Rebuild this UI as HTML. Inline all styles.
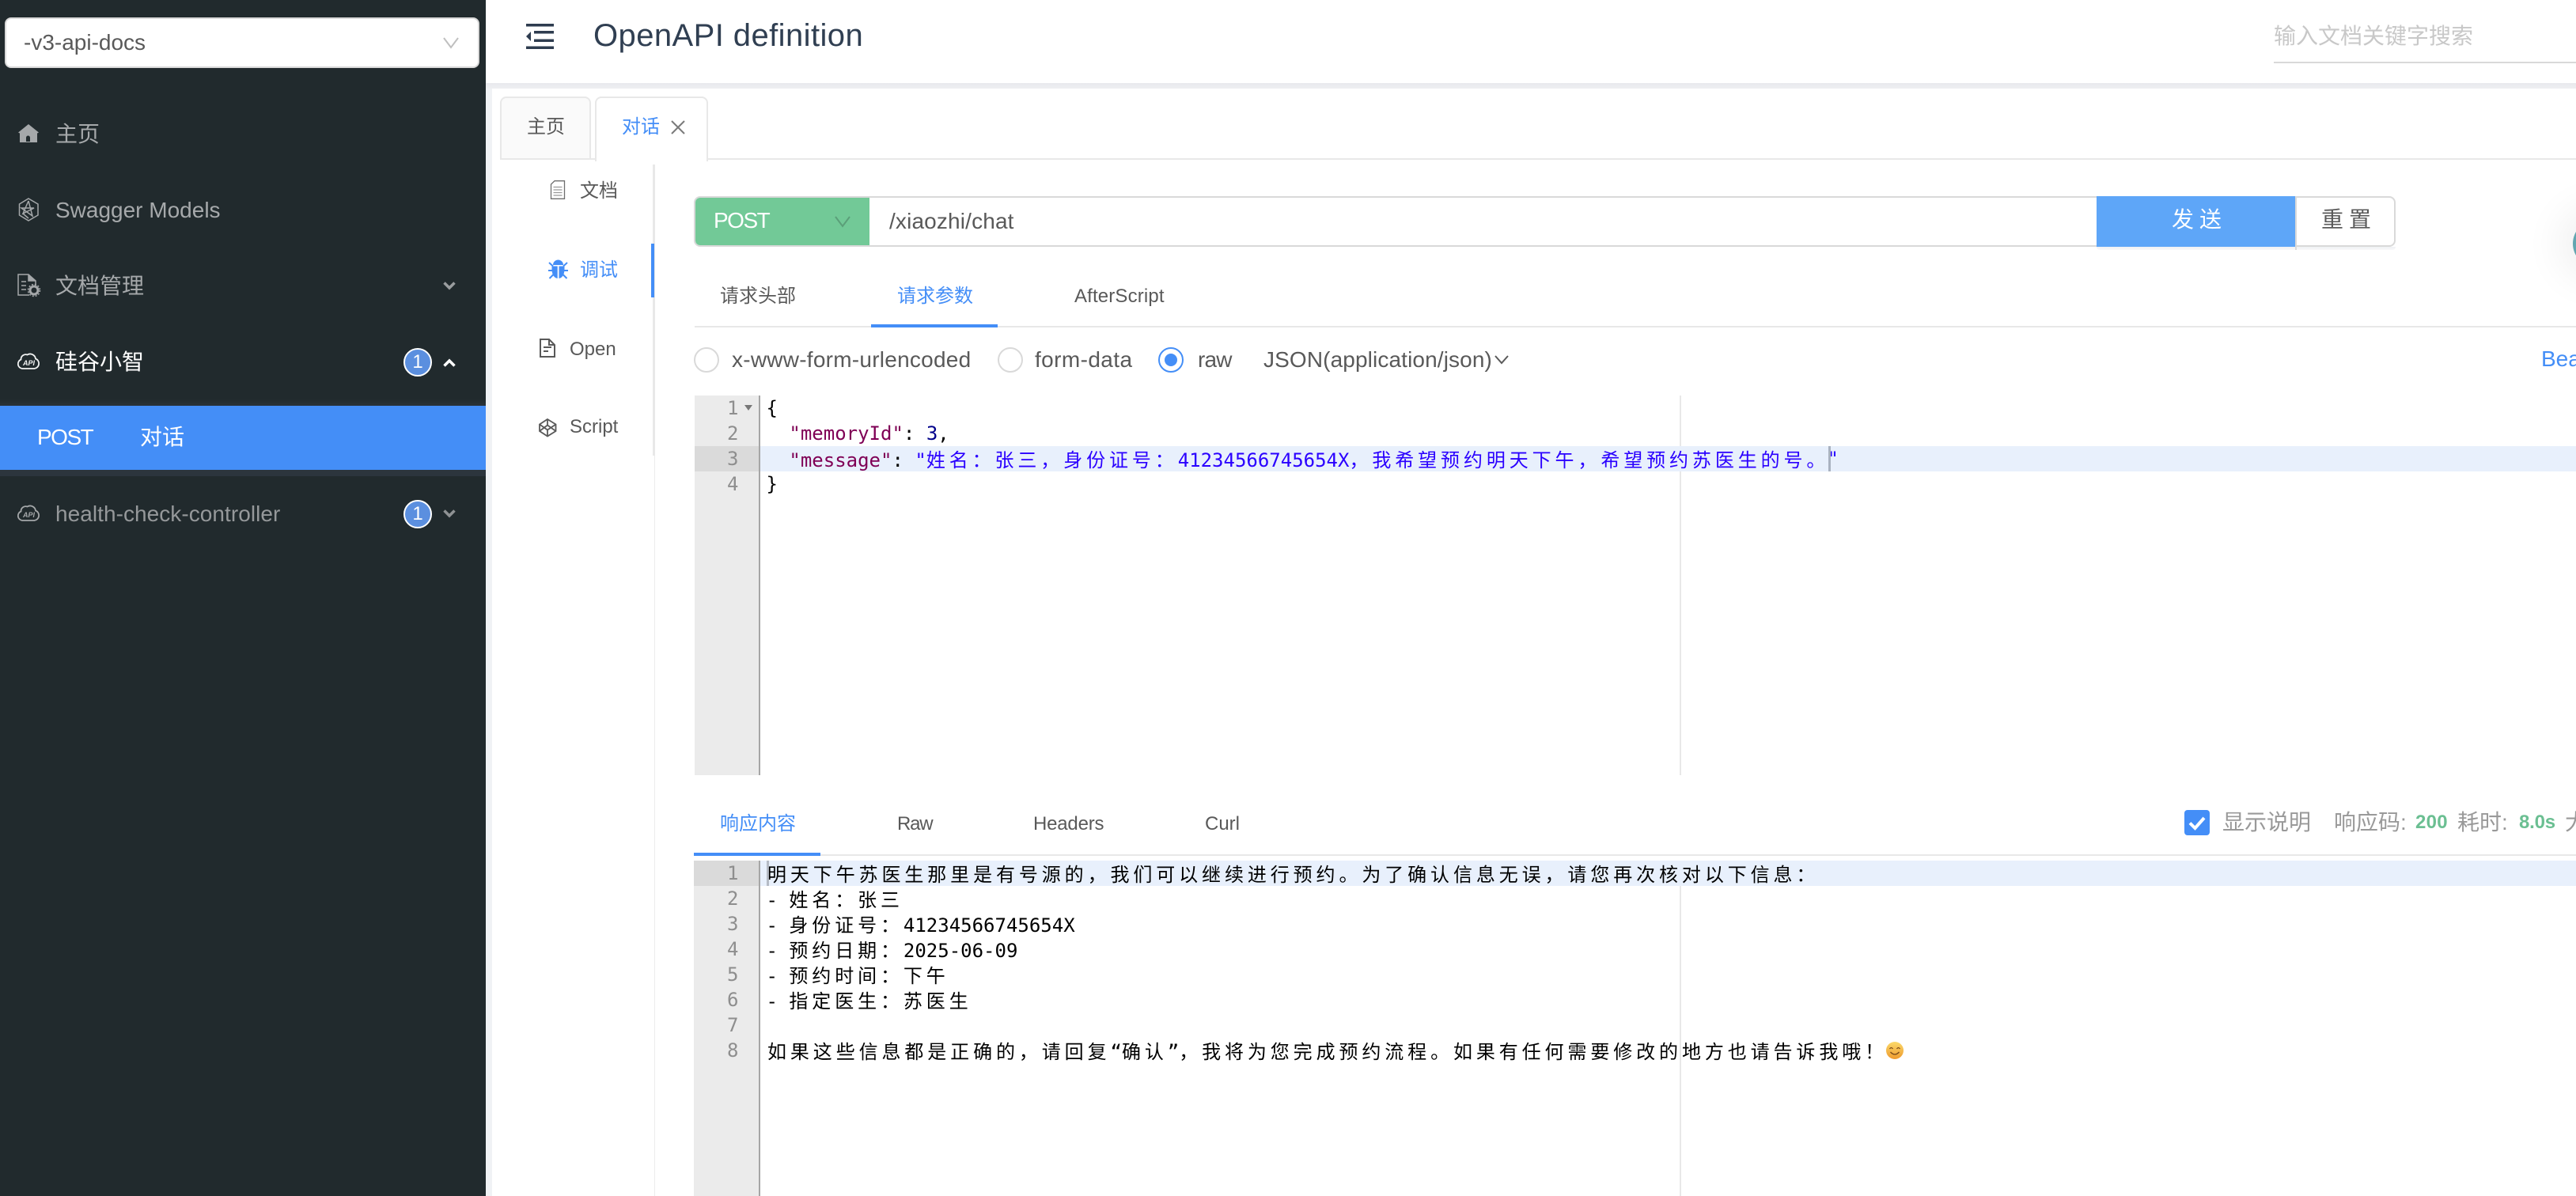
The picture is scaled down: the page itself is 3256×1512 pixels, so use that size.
<!DOCTYPE html>
<html lang="zh-CN"><head><meta charset="utf-8"><title>OpenAPI definition</title>
<style>
*{box-sizing:border-box;margin:0;padding:0}
html,body{width:3256px;height:1512px;overflow:hidden;background:#fff}
body{position:relative;font-family:"Liberation Sans","Noto Sans CJK SC",sans-serif;color:#595959}
.a{position:absolute}
.t{position:absolute;white-space:nowrap;line-height:40px;height:40px}
.f28{font-size:28px}.f24{font-size:24px}
.side{color:#a6a9ab}
.blue{color:#448ef7}
.badge{position:absolute;left:510px;width:36px;height:36px;border-radius:50%;background:#5b8fdf;border:2px solid #fff;color:#fff;font-size:24px;line-height:32px;text-align:center}
svg{position:absolute;overflow:visible}
.m{position:absolute;left:968.5px;height:32px;line-height:32px;font-family:"DejaVu Sans Mono","Noto Sans CJK SC",monospace;font-size:24px;white-space:pre;color:#000}
.m i{font-style:normal;letter-spacing:4.898px;font-family:"Noto Sans CJK SC",sans-serif}
.n{position:absolute;left:878px;width:55.5px;height:32px;line-height:32px;text-align:right;font-family:"DejaVu Sans Mono",monospace;font-size:24px;color:#8e8e8e}
.k{color:#7f0055}.s{color:#2a00ff}.d{color:#00008b}
</style></head><body>

<!-- sidebar -->
<div class="a" style="left:0;top:0;width:614px;height:1512px;background:#212a2d"></div>
<div class="a" style="left:614px;top:105px;width:8px;height:1407px;background:#f0f2f5"></div>
<div class="a" style="left:6px;top:22px;width:600px;height:64px;background:#fff;border:2px solid #d9d9d9;border-radius:8px"></div>
<div class="t f28" style="left:30px;top:34px;color:#595959">-v3-api-docs</div>
<svg style="left:560px;top:47px" width="20" height="14"><path d="M1 1L10 13L19 1" fill="none" stroke="#bfbfbf" stroke-width="2"/></svg>

<svg style="left:0;top:0" width="60" height="700">
<path d="M36 157L23 167.5L25 168.500V180H47V168.500L49 167.500Z" fill="#a5a8aa"/><path d="M33 179V174a2.500 2.500 0 0 1 5 0V179Z" fill="#212a2d"/>
<g fill="none" stroke="#a5a8aa" stroke-width="1.500"><path d="M36 251L48 258V272L36 279L24.500 272V258Z"/><path d="M36 254L29 270L43 263H27L41 273L36 254M29 270L36 276"/></g>
<g fill="none" stroke="#a5a8aa" stroke-width="1.500"><path d="M37 373H23V347H36L45 355V361"/><path d="M36 347V355H45" fill="#a5a8aa"/><path d="M27 356H33M27 361H33M27 366H33"/></g>
<circle cx="43" cy="367" r="5" fill="none" stroke="#a5a8aa" stroke-width="3"/><circle cx="43" cy="367" r="7.500" fill="none" stroke="#a5a8aa" stroke-width="1.500" stroke-dasharray="2 2"/>
<path d="M28 466a6 6 0 0 1-1.500-11.500a6 6 0 0 1 8-6a7 7 0 0 1 10.500 5a6.500 6.500 0 0 1-1.500 12.500Z" fill="none" stroke="#f2f3f3" stroke-width="1.800" />
<text x="29" y="462" font-family="Liberation Sans" font-style="italic" font-weight="bold" font-size="9" fill="#f2f3f3">API</text>
<path d="M28 658a6 6 0 0 1-1.500-11.500a6 6 0 0 1 8-6a7 7 0 0 1 10.500 5a6.500 6.500 0 0 1-1.500 12.500Z" fill="none" stroke="#a5a8aa" stroke-width="1.800" />
<text x="29" y="654" font-family="Liberation Sans" font-style="italic" font-weight="bold" font-size="9" fill="#a5a8aa">API</text>
</svg>

<div class="t f28 side" style="left:70px;top:150px">主页</div>
<div class="t f28 side" style="left:70px;top:246px">Swagger Models</div>
<div class="t f28 side" style="left:70px;top:342px">文档管理</div>
<svg style="left:560px;top:356px" width="16" height="10"><path d="M1.500 1.500L8 8L14.500 1.500" fill="none" stroke="#9a9d9f" stroke-width="3.500"/></svg>
<div class="t f28" style="left:70px;top:438px;color:#fff">硅谷小智</div>
<div class="badge" style="top:440px">1</div>
<svg style="left:560px;top:454px" width="16" height="10"><path d="M1.500 8.500L8 2L14.500 8.500" fill="none" stroke="#fff" stroke-width="3.500"/></svg>
<div class="a" style="left:0;top:505px;width:614px;height:8px;background:linear-gradient(#212a2d,#2a3238)"></div>
<div class="a" style="left:0;top:513px;width:614px;height:81px;background:#448ef7"></div>
<div class="a" style="left:0;top:594px;width:614px;height:8px;background:#2c353d"></div>
<div class="t f28" style="left:47px;top:533px;color:#fff;letter-spacing:-1.500px">POST</div>
<div class="t f28" style="left:177px;top:533px;color:#fff">对话</div>
<div class="t f28" style="left:70px;top:630px;color:#95989a;letter-spacing:.05px">health-check-controller</div>
<div class="badge" style="top:632px">1</div>
<svg style="left:560px;top:644px" width="16" height="10"><path d="M1.500 1.500L8 8L14.500 1.500" fill="none" stroke="#8f9294" stroke-width="3.500"/></svg>

<!-- header -->
<div class="a" style="left:614px;top:105px;width:2642px;height:7px;background:linear-gradient(#e8e9ed,#eeeff2)"></div>
<svg style="left:660px;top:26px" width="44" height="40" fill="#2e3c4f"><rect x="5" y="4" width="35" height="3.500"/><rect x="15" y="13" width="25" height="3.500"/><rect x="15" y="23.500" width="25" height="3.500"/><rect x="5" y="32.500" width="35" height="3.500"/><path d="M5 20L11 14V26Z"/></svg>
<div class="t" style="left:750px;top:25px;font-size:40px;color:#303f52;letter-spacing:.42px">OpenAPI definition</div>
<div class="t f28" style="left:2874px;top:26px;color:#c8c8c8">输入文档关键字搜索</div>
<div class="a" style="left:2874px;top:78px;width:382px;height:2px;background:#d9d9d9"></div>

<!-- page tabs -->
<div class="a" style="left:632px;top:200px;width:2624px;height:2px;background:#e8e8e8"></div>
<div class="a" style="left:632px;top:122px;width:115px;height:80px;background:#fafafa;border:2px solid #e8e8e8;border-radius:8px 8px 0 0"></div>
<div class="a" style="left:752px;top:122px;width:143px;height:82px;background:#fff;border:2px solid #e8e8e8;border-bottom:0;border-radius:8px 8px 0 0"></div>
<div class="t f24" style="left:666px;top:141px">主页</div>
<div class="t f24 blue" style="left:786px;top:141px">对话</div>
<svg style="left:848px;top:152px" width="18" height="18"><path d="M1 1L17 17M17 1L1 17" stroke="#7a7a7a" stroke-width="2" fill="none"/></svg>

<!-- vertical tabs -->
<div class="a" style="left:825px;top:208px;width:3px;height:368px;background:#e8e8e8"></div>
<div class="a" style="left:827px;top:576px;width:1px;height:936px;background:#ececec"></div>
<div class="a" style="left:823px;top:308px;width:4px;height:68px;background:#448ef7"></div>
<svg style="left:0;top:0" width="760" height="600">
<g fill="none" stroke="#6e6e6e" stroke-width="1.300"><path d="M701 228.700H713.500V251.300H696.500V233Z"/><path d="M699.500 236.500H710.500M699.500 240H710.500M699.500 243.500H710.500M699.500 247H710.500" stroke="#999"/></g>
<g fill="#448ef7"><path d="M699 335a6.500 6.500 0 0 1 13 0Z"/><path d="M704.700 336.500V352C699 351 697.500 345 697.500 340V336.500Z"/><path d="M706.500 336.500V352C712 351 713.500 345 713.500 340V336.500Z"/></g>
<g stroke="#448ef7" stroke-width="2" fill="none"><path d="M694 332L699 336.500M717 332L712 336.500M693 342H698M718 342H713M694.500 352L699.500 347M716.500 352L711.500 347"/></g>
<g fill="none" stroke="#595959" stroke-width="2"><path d="M683 429H694L701 436V451H683Z"/><path d="M694 429V436H701"/><path d="M687 439H697M687 444H693"/></g>
<g fill="none" stroke="#595959" stroke-width="1.800"><path d="M692 530L702.500 536.500V545L692 551.500L682 545V536.500Z"/><path d="M682 536.500L692 543.500L702.500 536.500M682 545L692 537.500L702.500 545M692 530V537.500M692 543.500V551.500"/></g>
</svg>
<div class="t f24" style="left:733px;top:222px">文档</div>
<div class="t f24 blue" style="left:733px;top:322px">调试</div>
<div class="t f24" style="left:720px;top:422px">Open</div>
<div class="t f24" style="left:720px;top:520px">Script</div>

<!-- url bar -->
<div class="a" style="left:877px;top:248px;width:2151px;height:64px;border:2px solid #d9d9d9;border-radius:8px;background:#fff"></div>
<div class="a" style="left:879px;top:250px;width:220px;height:60px;background:#72c997;border-radius:6px 0 0 6px"></div>
<div class="t f28" style="left:902px;top:259px;color:#fff;letter-spacing:-1.500px">POST</div>
<svg style="left:1055px;top:273px" width="20" height="14"><path d="M1 1L10 13L19 1" fill="none" stroke="#5b9f79" stroke-width="2"/></svg>
<div class="t f28" style="left:1124px;top:260px;letter-spacing:.15px">/xiaozhi/chat</div>
<div class="a" style="left:2650px;top:312px;width:378px;height:4px;background:linear-gradient(#eff1f4,#f9f9fa);border-radius:0 0 6px 6px"></div>
<div class="a" style="left:2650px;top:248px;width:251px;height:64px;background:#5ea6f8"></div>
<div class="a" style="left:2901px;top:248px;width:2px;height:68px;background:#d9d9d9"></div>
<div class="t f28" style="left:2745px;top:258px;color:#fff;letter-spacing:7px">发送</div>
<div class="t f28" style="left:2934px;top:258px;letter-spacing:7px">重置</div>
<div class="a" style="left:3252px;top:278px;width:60px;height:60px;border-radius:50%;background:#62a6b0;box-shadow:0 0 50px 18px rgba(0,0,0,.06)"></div>

<!-- param tabs -->
<div class="a" style="left:878px;top:412px;width:2378px;height:2px;background:#e8e8e8"></div>
<div class="a" style="left:1101px;top:410px;width:160px;height:4px;background:#448ef7"></div>
<div class="t f24" style="left:910px;top:355px">请求头部</div>
<div class="t f24 blue" style="left:1134px;top:355px">请求参数</div>
<div class="t f24" style="left:1358px;top:355px;letter-spacing:.15px">AfterScript</div>

<!-- radios -->
<div class="a" style="left:877px;top:439px;width:32px;height:32px;border:2px solid #d9d9d9;border-radius:50%"></div>
<div class="t f28" style="left:925px;top:435px;letter-spacing:.25px">x-www-form-urlencoded</div>
<div class="a" style="left:1261px;top:439px;width:32px;height:32px;border:2px solid #d9d9d9;border-radius:50%"></div>
<div class="t f28" style="left:1308px;top:435px;letter-spacing:.4px">form-data</div>
<div class="a" style="left:1464px;top:439px;width:32px;height:32px;border:2px solid #448ef7;border-radius:50%"></div>
<div class="a" style="left:1472px;top:447px;width:16px;height:16px;background:#448ef7;border-radius:50%"></div>
<div class="t f28" style="left:1514px;top:435px;letter-spacing:-.8px">raw</div>
<div class="t f28" style="left:1597px;top:435px;letter-spacing:.12px">JSON(application/json)</div>
<svg style="left:1889px;top:449px" width="18" height="12"><path d="M1 1L9 10L17 1" fill="none" stroke="#595959" stroke-width="2"/></svg>
<div class="t f28 blue" style="left:3212px;top:434px">Beautify</div>

<!-- editor 1 -->
<div class="a" style="left:878px;top:500px;width:81px;height:480px;background:#ebebeb"></div>
<div class="a" style="left:959px;top:500px;width:2px;height:480px;background:#a6a6a6"></div>
<div class="a" style="left:2123px;top:500px;width:1.500px;height:480px;background:#e8e8e8"></div>
<div class="a" style="left:878px;top:564px;width:81px;height:32px;background:#dadada"></div>
<div class="a" style="left:961px;top:564px;width:2295px;height:32px;background:#e8f0fc"></div>
<div class="n" style="top:500px">1</div><div class="n" style="top:532px">2</div><div class="n" style="top:564px">3</div><div class="n" style="top:596px">4</div>
<svg style="left:941px;top:512px" width="10" height="8"><path d="M0 0H10L5 7Z" fill="#777"/></svg>
<div class="m" style="top:500px">{</div>
<div class="m" style="top:532px">  <span class="k">"memoryId"</span>: <span class="d">3</span>,</div>
<div class="m" style="top:564px">  <span class="k">"message"</span>: <span class="s">"<i>姓名：张三，身份证号：</i>41234566745654X<i>，我希望预约明天下午，希望预约苏医生的号。</i></span></div>
<div class="m s" style="top:564px;left:2309.5px">"</div>
<div class="m" style="top:596px">}</div>
<div class="a" style="left:2311px;top:564px;width:3px;height:32px;background:#a9b2c0"></div>

<!-- response tabs -->
<div class="a" style="left:877px;top:1080px;width:2379px;height:2px;background:#e8e8e8"></div>
<div class="a" style="left:877px;top:1078px;width:160px;height:4px;background:#448ef7"></div>
<div class="t f24 blue" style="left:910px;top:1022px">响应内容</div>
<div class="t f24" style="left:1134px;top:1022px;letter-spacing:-1.200px">Raw</div>
<div class="t f24" style="left:1306px;top:1022px;letter-spacing:-.2px">Headers</div>
<div class="t f24" style="left:1523px;top:1022px">Curl</div>
<div class="a" style="left:2761px;top:1024px;width:32px;height:32px;background:#448ef7;border-radius:4px"></div>
<svg style="left:2761px;top:1024px" width="32" height="32"><path d="M7 16.500L13.500 23L25 10" fill="none" stroke="#fff" stroke-width="4"/></svg>
<div class="t f28" style="left:2809px;top:1020px;color:#999">显示说明</div>
<div class="t f28" style="left:2950px;top:1020px;color:#999">响应码:</div>
<div class="t f24" style="left:3053px;top:1020px;color:#6bbf92;font-weight:bold;letter-spacing:.3px">200</div>
<div class="t f28" style="left:3106px;top:1020px;color:#999">耗时:</div>
<div class="t f24" style="left:3184px;top:1020px;color:#6bbf92;font-weight:bold;letter-spacing:-.2px">8.0s</div>
<div class="t f28" style="left:3242px;top:1020px;color:#999">大小:</div>

<!-- editor 2 -->
<div class="a" style="left:877px;top:1088px;width:82px;height:424px;background:#ebebeb"></div>
<div class="a" style="left:959px;top:1088px;width:2px;height:424px;background:#a6a6a6"></div>
<div class="a" style="left:2123px;top:1120px;width:1.500px;height:392px;background:#e8e8e8"></div>
<div class="a" style="left:877px;top:1088px;width:82px;height:32px;background:#dadada"></div>
<div class="a" style="left:961px;top:1088px;width:2295px;height:32px;background:#e8f0fc"></div>
<div class="a" style="left:969px;top:1088px;width:3px;height:32px;background:#b5bbc5"></div>
<div class="n" style="top:1088px">1</div><div class="n" style="top:1120px">2</div><div class="n" style="top:1152px">3</div><div class="n" style="top:1184px">4</div><div class="n" style="top:1216px">5</div><div class="n" style="top:1248px">6</div><div class="n" style="top:1280px">7</div><div class="n" style="top:1312px">8</div>
<div class="m" style="top:1088px;left:970px"><i>明天下午苏医生那里是有号源的，我们可以继续进行预约。为了确认信息无误，请您再次核对以下信息：</i></div>
<div class="m" style="top:1120px">- <i>姓名：张三</i></div>
<div class="m" style="top:1152px">- <i>身份证号：</i>41234566745654X</div>
<div class="m" style="top:1184px">- <i>预约日期：</i>2025-06-09</div>
<div class="m" style="top:1216px">- <i>预约时间：下午</i></div>
<div class="m" style="top:1248px">- <i>指定医生：苏医生</i></div>
<div class="m" style="top:1312px;left:970px"><i>如果这些信息都是正确的，请回复</i>“<i>确认</i>”<i>，我将为您完成预约流程。如果有任何需要修改的地方也请告诉我哦！</i></div>
<svg style="left:2383px;top:1316px" width="24" height="24"><defs><linearGradient id="e" x1="0" y1="0" x2="0" y2="1"><stop offset="0" stop-color="#fbd96a"/><stop offset="1" stop-color="#ee9a2e"/></linearGradient></defs><circle cx="12" cy="12" r="11" fill="url(#e)"/><path d="M5.500 10q2-3 4 0M14.500 10q2-3 4 0" fill="none" stroke="#7a4a1a" stroke-width="1.300"/><path d="M6.500 14q5.500 6 11 0" fill="none" stroke="#7a4a1a" stroke-width="1.300"/></svg>

</body></html>
